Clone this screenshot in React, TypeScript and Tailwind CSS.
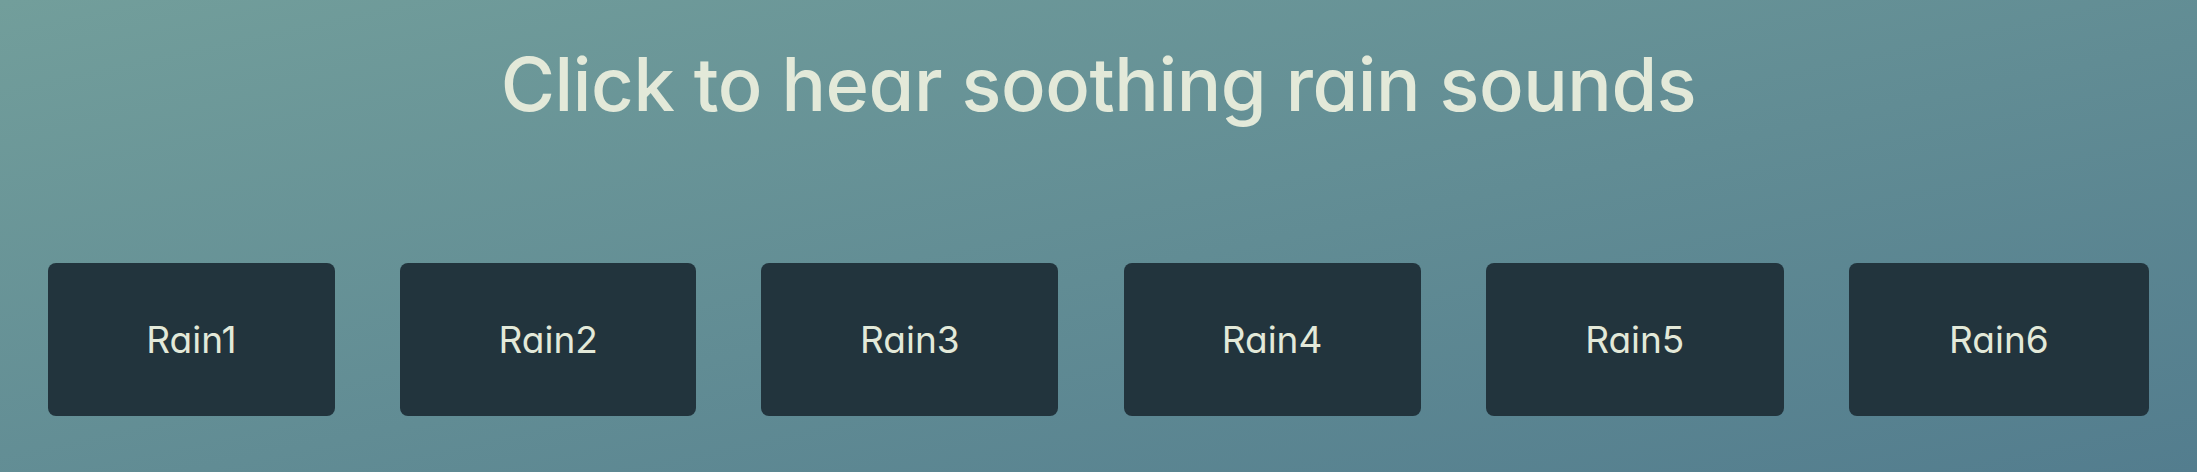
const sounds = [
  { label: 'Rain1', width: 'w-[287px]' },
  { label: 'Rain2', width: 'w-[296px]' },
  { label: 'Rain3', width: 'w-[297px]' },
  { label: 'Rain4', width: 'w-[297px]' },
  { label: 'Rain5', width: 'w-[298px]' },
  { label: 'Rain6', width: 'w-[300px]' },
];

export default function App() {
  return (
    <div className="h-[472px] w-full overflow-hidden bg-gradient-to-br from-[#729e9b] to-[#537d8e] font-['Inter','Liberation_Sans',sans-serif] [font-feature-settings:'cv11'] text-[#e3e9d9]">
      <h1 className="pt-[40px] text-center text-[74px] leading-[88px] font-medium tracking-[-0.4px]">
        Click to hear soothing rain sounds
      </h1>

      <div className="mt-[135px] flex justify-between px-[48px]">
        {sounds.map((s) => (
          <button
            key={s.label}
            className={`${s.width} h-[153px] rounded-lg bg-[#22343d] text-[37px] font-normal text-[#e3e9d9]`}
          >
            {s.label}
          </button>
        ))}
      </div>
    </div>
  );
}
